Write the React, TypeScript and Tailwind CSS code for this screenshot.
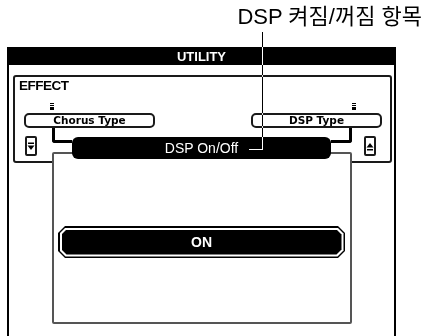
export default function App() {
  return (
    <div className="relative w-[424px] h-[336px] overflow-hidden bg-white font-['Liberation_Sans',Arial,sans-serif] text-black">
      {/* callout label */}
      <div className="h-[47px] flex justify-end pr-[2px] pt-[6px]">
        <span className="text-[22px] leading-none font-['Liberation_Sans','Noto_Sans_CJK_KR',sans-serif]">
          DSP 켜짐/꺼짐 항목
        </span>
      </div>

      {/* display frame */}
      <div className="ml-[7px] w-[389px] h-[289px] border-x-2 border-black">
        <div className="h-[18px] bg-black flex items-center justify-center text-white font-bold text-[13px] leading-none">
          UTILITY
        </div>

        <div className="pt-[10px]">
          {/* EFFECT page */}
          <div className="ml-[4px] mr-[2px] h-[88px] border-2 border-[#1a1a1a] rounded-[3px]">
            <div className="pl-[4px] pt-[3px] font-bold text-[13.5px] leading-[12px] tracking-[-0.5px]">
              EFFECT
            </div>

            <div className="mt-[11px] flex justify-between pl-[9px] pr-[8px]">
              <div className="w-[131px] flex flex-col items-start">
                <Mark className="ml-[26px]" />
                <TypeBox label="Chorus Type" />
              </div>
              <div className="w-[131px] flex flex-col items-end">
                <Mark className="mr-[26px]" />
                <TypeBox label="DSP Type" />
              </div>
            </div>

            <div className="mt-[8px] flex justify-between pl-[10px] pr-[14px]">
              <ArrowButton dir="down" />
              <ArrowButton dir="up" />
            </div>
          </div>

          {/* DSP On/Off window */}
          <div className="relative z-10 -mt-[11px] ml-[43px] w-[300px] h-[172px] border-2 border-[#555] rounded-[2px] bg-white">
            <div className="-mt-[17px] ml-[18px] w-[259px] h-[22px] bg-black rounded-[6px] flex items-center justify-center text-white text-[14px] leading-none">
              DSP On/Off
            </div>

            <div className="mt-[67px] ml-[4px] w-[287px] h-[32px] bg-black p-[1.5px] [clip-path:polygon(7px_0,calc(100%-7px)_0,100%_7px,100%_calc(100%-7px),calc(100%-7px)_100%,7px_100%,0_calc(100%-7px),0_7px)]">
              <div className="w-full h-full bg-white p-[2px] [clip-path:polygon(6px_0,calc(100%-6px)_0,100%_6px,100%_calc(100%-6px),calc(100%-6px)_100%,6px_100%,0_calc(100%-6px),0_6px)]">
                <div className="w-full h-full bg-black flex items-center justify-center text-white font-bold text-[14px] leading-none [clip-path:polygon(5px_0,calc(100%-5px)_0,100%_5px,100%_calc(100%-5px),calc(100%-5px)_100%,5px_100%,0_calc(100%-5px),0_5px)]">
                  ON
                </div>
              </div>
            </div>
          </div>
        </div>
      </div>

      {/* connectors from the type boxes to the window */}
      <div className="absolute z-20 left-[52px] top-[128px] w-[20px] h-[15px] border-l-[3px] border-b-[3px] border-black rounded-bl-[3px]" />
      <div className="absolute z-20 left-[331px] top-[128px] w-[21px] h-[15px] border-r-[3px] border-b-[3px] border-black rounded-br-[3px]" />

      {/* leader line */}
      <div className="absolute z-30 left-[262px] top-[32px] w-px h-[118px] bg-white mix-blend-difference" />
      <div className="absolute z-30 left-[249px] top-[149px] w-[13px] h-px bg-white mix-blend-difference" />
    </div>
  );
}

function Mark({ className }: { className?: string }) {
  return (
    <div className={`w-[4px] h-[7px] flex flex-col gap-px ${className ?? ''}`}>
      <div className="h-px bg-black" />
      <div className="h-px bg-black" />
      <div className="h-[3px] bg-black" />
    </div>
  );
}

function TypeBox({ label }: { label: string }) {
  return (
    <div className="mt-[3px] w-[131px] h-[15px] border-2 border-[#1a1a1a] rounded-[5px] flex items-center justify-center font-['DejaVu_Sans',sans-serif] font-bold text-[10.5px] leading-none">
      {label}
    </div>
  );
}

function ArrowButton({ dir }: { dir: 'up' | 'down' }) {
  return (
    <div className="w-[12px] h-[20px] border-2 border-[#1a1a1a] rounded-[2px] flex items-center justify-center">
      <svg width="8" height="9" viewBox="0 0 8 9">
        {dir === 'down' ? (
          <>
            <rect x="1" y="0.5" width="6" height="1.5" fill="#000" />
            <polygon points="0.5,3.5 7.5,3.5 4,8" fill="#000" />
          </>
        ) : (
          <>
            <polygon points="0.5,5.5 7.5,5.5 4,1" fill="#000" />
            <rect x="1" y="7" width="6" height="1.5" fill="#000" />
          </>
        )}
      </svg>
    </div>
  );
}
